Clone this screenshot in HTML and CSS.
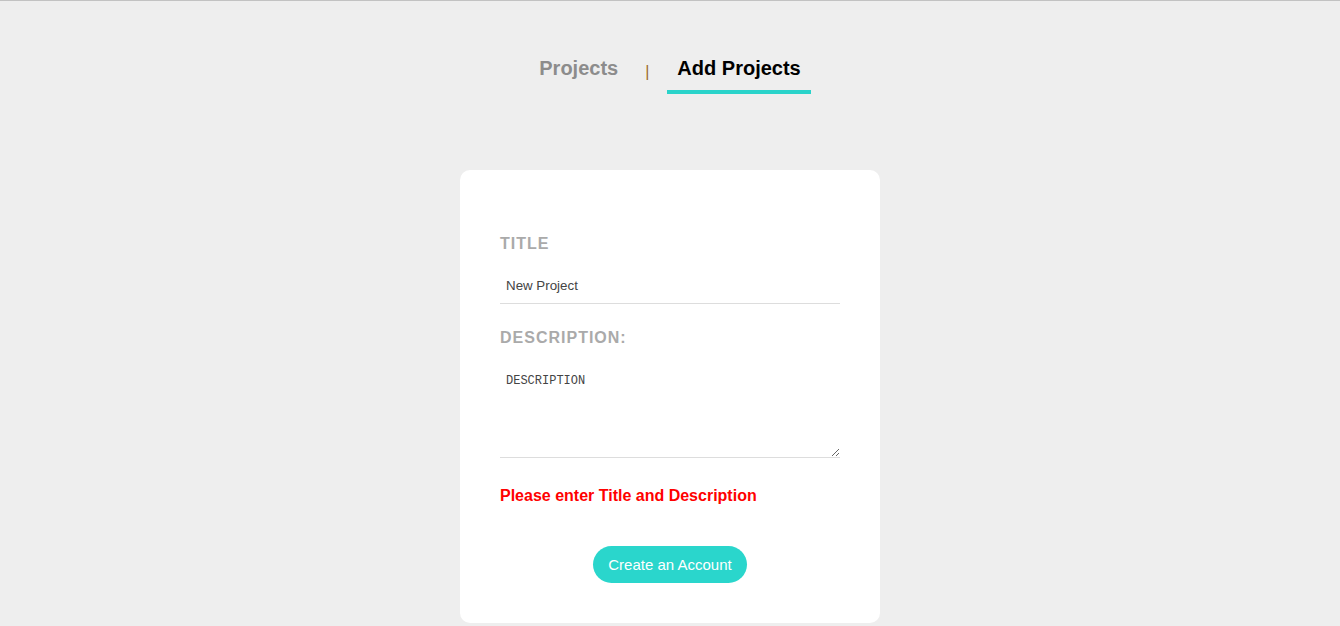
FILE: index.html
```html
<!DOCTYPE html>
<html lang="en">
<head>
<meta charset="utf-8">
<title>Add Projects</title>
<link rel="stylesheet" href="styles.css">
</head>
<body>
<nav class="tabs">
  <a class="tab" href="#">Projects</a>
  <span class="sep">|</span>
  <a class="tab tab-active" href="#">Add Projects</a>
</nav>
<main class="card">
  <form class="form">
    <label class="label" for="title">TITLE</label>
    <input class="input" id="title" type="text" value="New Project">
    <label class="label label-desc" for="desc">DESCRIPTION:</label>
    <textarea class="textarea" id="desc">DESCRIPTION</textarea>
    <p class="error">Please enter Title and Description</p>
    <div class="actions">
      <button class="btn" type="button">Create an Account</button>
    </div>
  </form>
</main>
</body>
</html>
```
FILE: styles.css
```css
* { box-sizing: border-box; }

html, body {
  margin: 0;
  padding: 0;
  height: 100%;
}

body {
  background: #eeeeee;
  border-top: 1px solid #c2c2c2;
  font-family: "Liberation Sans", Arial, sans-serif;
  overflow: hidden;
}

.tabs {
  display: flex;
  justify-content: center;
  align-items: flex-start;
  padding-top: 56px;
}

.tab {
  display: block;
  font-size: 20px;
  font-weight: bold;
  line-height: 23px;
  color: #8c8c8c;
  text-decoration: none;
  padding: 0 10px 10px;
  border-bottom: 4px solid transparent;
}

.tab-active {
  color: #000;
  border-bottom-color: #2ad3ca;
}

.sep {
  display: block;
  font-size: 16px;
  line-height: 23px;
  padding-top: 3px;
  margin: 0 18px 0 17px;
  color: #9a6a2a;
}

.card {
  width: 420px;
  margin: 76px auto 0;
  background: #fff;
  border-radius: 10px;
  padding: 65px 40px 40px;
}

.form {
  display: flex;
  flex-direction: column;
}

.label {
  font-size: 16px;
  font-weight: bold;
  line-height: 18px;
  letter-spacing: 1px;
  color: #aaaaaa;
}

.label-desc {
  margin-top: 25px;
}

.input {
  margin-top: 15px;
  border: none;
  border-bottom: 1px solid #dddddd;
  padding: 10px 6px 10px;
  font-family: "Liberation Sans", Arial, sans-serif;
  font-size: 13.333px;
  line-height: 15px;
  color: #444;
  outline: none;
  width: 100%;
}

.textarea {
  margin-top: 18px;
  height: 93px;
  border: none;
  border-bottom: 1px solid #dddddd;
  padding: 9px 6px 6px;
  font-family: "Liberation Mono", "DejaVu Sans Mono", monospace;
  font-size: 12px;
  line-height: 14px;
  color: #444;
  outline: none;
  width: 100%;
  resize: vertical;
}

.error {
  margin: 29px 0 0;
  color: #ff0000;
  font-size: 16px;
  font-weight: bold;
  line-height: 18px;
}

.actions {
  display: flex;
  justify-content: center;
  margin-top: 41px;
}

.btn {
  background: #2ad6cc;
  color: #fff;
  border: none;
  border-radius: 19px;
  height: 37px;
  padding: 0 15px;
  font-family: "Liberation Sans", Arial, sans-serif;
  font-size: 15px;
  line-height: 17px;
  cursor: pointer;
}
```
